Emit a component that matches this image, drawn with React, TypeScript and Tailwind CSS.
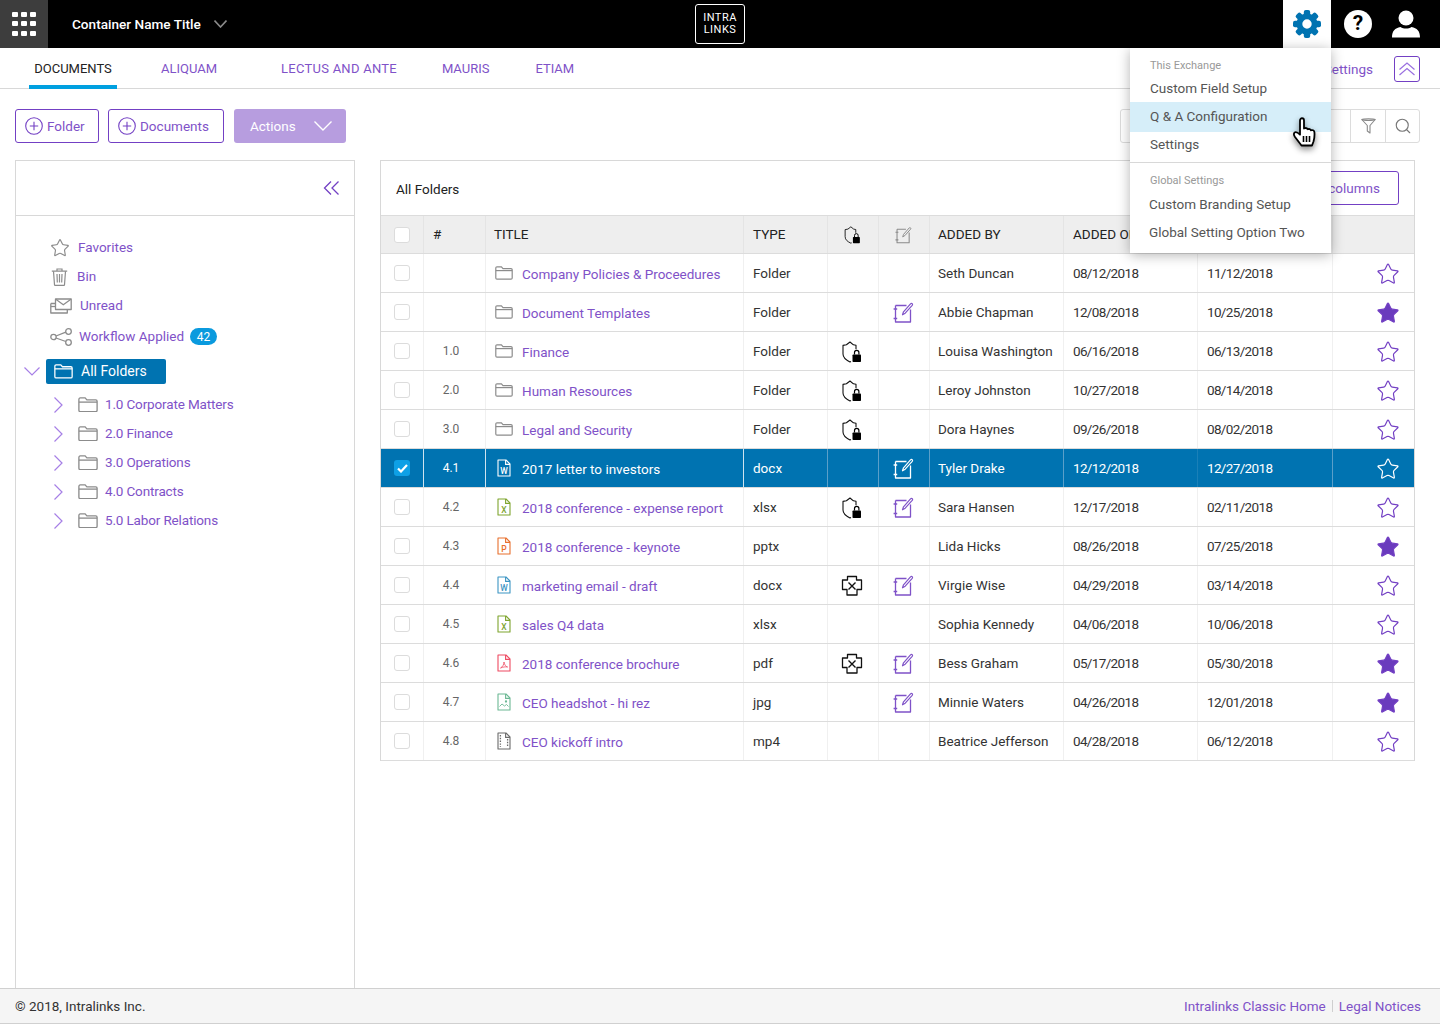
import { Search, Star } from "lucide-react"

const purple = "text-[#7f52c8]"

function Folder({ color = "#8c8c8c", w = 18 }: { color?: string; w?: number }) {
  return (
    <svg width={w} height={(w * 14) / 18} viewBox="0 0 18 14" fill="none" stroke={color} strokeWidth="1.2" className="shrink-0">
      <path d="M.8 2.2c0-.8.5-1.4 1.2-1.4h4.4l1.6 1.8h8c.7 0 1.2.5 1.2 1.2v8.2c0 .7-.5 1.2-1.2 1.2H2c-.7 0-1.2-.5-1.2-1.2z" />
      <path d="M.8 4.6h16.4" />
    </svg>
  )
}

function FileIcon({ kind, white }: { kind: string; white?: boolean }) {
  const colors: Record<string, string> = { docx: "#3d95c4", xlsx: "#7fa52f", pptx: "#e8702e", pdf: "#ee4b62", jpg: "#6cb894", mp4: "#6b6b6b" }
  const c = white ? "#ffffff" : colors[kind]
  const letters: Record<string, string> = { docx: "W", xlsx: "X", pptx: "P" }
  return (
    <svg width="14" height="18" viewBox="0 0 14 18" fill="none" stroke={c} strokeWidth="1.1" className="shrink-0">
      <path d="M1 1h8l4 4v12H1z" strokeLinejoin="round" />
      <path d="M8.6 1v4.4H13" />
      {letters[kind] && (
        <text x="7" y="14.5" textAnchor="middle" fontSize="8.5" fill={c} stroke="none" fontFamily="Roboto, sans-serif" fontWeight="500">
          {letters[kind]}
        </text>
      )}
      {kind === "pdf" && <path d="M3.5 14c2-1 3.5-3.5 3.5-6 .4 2.5 1.6 4.5 3.6 5-2.3-.4-4.7 0-7.100 1z" strokeWidth=".8" />}
      {kind === "jpg" && (
        <>
          <path d="M2.500 13.500l2.500-2.500 2.500 2 2-1.500 2 2" strokeWidth=".9" />
          <circle cx="9" cy="8.500" r=".6" />
        </>
      )}
      {kind === "mp4" && <path d="M3.400 3v12M10.600 7v8" strokeDasharray="1.4 1.4" strokeWidth="1.3" />}
    </svg>
  )
}

function ShieldLock({ small }: { small?: boolean }) {
  return (
    <svg width={small ? 17 : 20} height={small ? 18 : 22} viewBox="0 0 20 22" fill="none" className="shrink-0">
      <path d="M9 20.600L8 21C4 19 1 17 1 13V4.400l3.400-.6L8 1l3.400 2.800 2.600.5v4" stroke="#111" strokeWidth="1.1" strokeLinejoin="round" />
      <rect x="10.500" y="13.500" width="8.500" height="7.500" rx=".8" fill="#000" />
      <path d="M12.500 13.500v-2a2.200 2.200 0 014.400 0v2" stroke="#000" strokeWidth="1.2" />
    </svg>
  )
}

function ShieldX() {
  return (
    <svg width="22" height="22" viewBox="0 0 22 22" fill="none" stroke="#111" strokeWidth="1.3" className="shrink-0">
      <path d="M6.500 1.500h9v3.500h5v9.500h-4.500v5.500h-10v-5.500H1.500V5h5z" strokeLinejoin="round" />
      <path d="M7.500 7.500l7 7M14.500 7.500l-7 7" strokeWidth="1.4" />
    </svg>
  )
}

function EditNote({ color = "#7f52c8", small }: { color?: string; small?: boolean }) {
  return (
    <svg width={small ? 17 : 21} height={small ? 18 : 21} viewBox="0 0 21 21" fill="none" stroke={color} strokeWidth="1.3" className="shrink-0">
      <path d="M2.500 3.500h11M2.500 3.500v16.500h15v-12.500" strokeLinejoin="round" />
      <path d="M.6 7h3.600M.6 16.500h3.600" />
      <path d="M9.500 12.800l1-3L17.500 1.800c.5-.6 1.200-.6 1.700-.1.5.5.500 1.100 0 1.700l-7 7.800z" strokeWidth="1.200" strokeLinejoin="round" />
    </svg>
  )
}

function PlusCircle() {
  return (
    <svg width="18" height="18" viewBox="0 0 18 18" fill="none" stroke="#7340c4" strokeWidth="1.100" className="shrink-0">
      <circle cx="9" cy="9" r="8.300" />
      <path d="M9 4.800v8.400M4.800 9h8.400" />
    </svg>
  )
}

function Bin() {
  return (
    <svg width="17" height="18" viewBox="0 0 17 18" fill="none" stroke="#8c8c8c" strokeWidth="1.200" className="shrink-0">
      <path d="M.8 3.200h15.400M6 3V1h5v2" />
      <path d="M2.500 3.200l1 13.500c0 .4.300.6.600.6h8.800c.3 0 .6-.2.6-.6l1-13.500" />
      <path d="M6 6l.3 8.500M8.500 6v8.500M11 6l-.3 8.500" />
    </svg>
  )
}

function Envelope() {
  return (
    <svg width="22" height="16" viewBox="0 0 22 16" fill="none" stroke="#8c8c8c" strokeWidth="1.300" className="shrink-0">
      <path d="M.8 5.500h5M.8 5.500V15h16.500v-3" strokeLinejoin="round" />
      <path d="M.8 8.500H5" />
      <path d="M5.500 1h15.700v10.500H5.500z" strokeLinejoin="round" fill="#fff" />
      <path d="M5.800 1.300l7.500 5.500 7.600-5.500" />
    </svg>
  )
}

function Workflow() {
  return (
    <svg width="22" height="18" viewBox="0 0 22 18" fill="none" stroke="#8c8c8c" strokeWidth="1.300" className="shrink-0">
      <circle cx="3.500" cy="9" r="2.700" />
      <circle cx="18.500" cy="3.500" r="2.800" />
      <circle cx="18.500" cy="14.500" r="2.800" />
      <path d="M6 8l9.800-3.800M6 10l9.800 3.500" />
    </svg>
  )
}

function Funnel() {
  return (
    <svg width="15" height="16" viewBox="0 0 15 16" fill="none" stroke="#8a8a8a" strokeWidth="1.100">
      <path d="M.8 1.500C2.500.6 12.500.6 14.200 1.500L9 7.500v7.500L6.300 13V7.500z" strokeLinejoin="round" />
      <path d="M.8 1.500c2 1.300 11.400 1.300 13.400 0" />
    </svg>
  )
}

function Hand() {
  return (
    <svg width="28" height="34" viewBox="0 0 28 34" className="drop-shadow-[0_3px_3px_rgba(0,0,0,0.45)]">
      <path
        d="M8 3.500c0-3 4-3 4 0v8l1.500-.5c1.500 0 2 .8 2.300 1.300 1.200-.6 2.700-.2 3.200 1 1.300-.6 3.200 0 3.400 1.700.3 3 .1 6-.9 9.500L20 28.500H9.500L3 20c-1.200-1.800-1.500-3.300-.5-4.300 1-.9 2.800-.6 5.500 2z"
        fill="#fff"
        stroke="#000"
        strokeWidth="1.800"
        strokeLinejoin="round"
      />
      <path d="M11.500 19v6M14.500 19v6M17.500 19v6" stroke="#000" strokeWidth="1.600" />
    </svg>
  )
}

function Gear() {
  const teeth = [0, 45, 90, 135, 180, 225, 270, 315]
  return (
    <svg width="28" height="28" viewBox="0 0 28 28" fill="#0073b1">
      {teeth.map((a) => (
        <rect key={a} x="10.800" y="0" width="6.400" height="8" rx="2" transform={`rotate(${a} 14 14)`} />
      ))}
      <path fillRule="evenodd" d="M14 3.500a10.500 10.500 0 100 21 10.500 10.500 0 000-21zm0 5.800a4.700 4.700 0 110 9.400 4.700 4.700 0 010-9.400z" />
    </svg>
  )
}

function Caret({ w, h, color, down, sw = 1.2 }: { w: number; h: number; color: string; down?: boolean; sw?: number }) {
  return (
    <svg width={w} height={h} viewBox={`0 0 ${w} ${h}`} fill="none" stroke={color} strokeWidth={sw} className="shrink-0">
      {down ? <path d={`M.5 .5L${w / 2} ${h - 1}L${w - 0.5} .5`} /> : <path d={`M.5 .5L${w - 1} ${h / 2}L.5 ${h - 0.5}`} />}
    </svg>
  )
}

const rows = [
  { n: "", title: "Company Policies & Proceedures", kind: "folder", type: "Folder", by: "Seth Duncan", on: "08/12/2018", mod: "11/12/2018" },
  { n: "", title: "Document Templates", kind: "folder", type: "Folder", edit: true, by: "Abbie Chapman", on: "12/08/2018", mod: "10/25/2018", fav: true },
  { n: "1.0", title: "Finance", kind: "folder", type: "Folder", lock: true, by: "Louisa Washington", on: "06/16/2018", mod: "06/13/2018" },
  { n: "2.0", title: "Human Resources", kind: "folder", type: "Folder", lock: true, by: "Leroy Johnston", on: "10/27/2018", mod: "08/14/2018" },
  { n: "3.0", title: "Legal and Security", kind: "folder", type: "Folder", lock: true, by: "Dora Haynes", on: "09/26/2018", mod: "08/02/2018" },
  { n: "4.1", title: "2017 letter to investors", kind: "docx", type: "docx", edit: true, by: "Tyler Drake", on: "12/12/2018", mod: "12/27/2018", sel: true },
  { n: "4.2", title: "2018 conference - expense report", kind: "xlsx", type: "xlsx", lock: true, edit: true, by: "Sara Hansen", on: "12/17/2018", mod: "02/11/2018" },
  { n: "4.3", title: "2018 conference - keynote", kind: "pptx", type: "pptx", by: "Lida Hicks", on: "08/26/2018", mod: "07/25/2018", fav: true },
  { n: "4.4", title: "marketing email - draft", kind: "docx", type: "docx", x: true, edit: true, by: "Virgie Wise", on: "04/29/2018", mod: "03/14/2018" },
  { n: "4.5", title: "sales Q4 data", kind: "xlsx", type: "xlsx", by: "Sophia Kennedy", on: "04/06/2018", mod: "10/06/2018" },
  { n: "4.6", title: "2018 conference brochure", kind: "pdf", type: "pdf", x: true, edit: true, by: "Bess Graham", on: "05/17/2018", mod: "05/30/2018", fav: true },
  { n: "4.7", title: "CEO headshot - hi rez", kind: "jpg", type: "jpg", edit: true, by: "Minnie Waters", on: "04/26/2018", mod: "12/01/2018", fav: true },
  { n: "4.8", title: "CEO kickoff intro", kind: "mp4", type: "mp4", by: "Beatrice Jefferson", on: "04/28/2018", mod: "06/12/2018" },
]

const grid = "grid grid-cols-[43px_62px_258px_84px_51px_51px_134px_134px_135px_81px]"

function Check({ on }: { on?: boolean }) {
  if (on) {
    return (
      <div className="flex h-4 w-4 items-center justify-center rounded-[3px] bg-[#0ea0e6]">
        <svg width="11" height="9" viewBox="0 0 11 9" fill="none" stroke="#fff" strokeWidth="2.200">
          <path d="M1 4.500l3 3 6-6.500" />
        </svg>
      </div>
    )
  }
  return <div className="h-4 w-4 rounded-[3px] border border-[#dcdcdc] bg-white" />
}

function Cell({ className = "", line = "border-[#f0f0f0]", children }: { className?: string; line?: string; children?: React.ReactNode }) {
  return <div className={`flex items-center border-r ${line} ${className}`}>{children}</div>
}

function TreeItem({ label }: { label: string }) {
  return (
    <div className="flex h-[29px] items-center pl-[38px]">
      <Caret w={9} h={16} color="#a67fe6" />
      <div className="ml-[15px]">
        <Folder w={20} />
      </div>
      <span className={`ml-[7px] tracking-[-0.15px] ${purple}`}>{label}</span>
    </div>
  )
}

export default function App() {
  return (
    <div className="relative flex h-[1024px] w-[1440px] flex-col overflow-hidden bg-white font-['Roboto',sans-serif] text-[13.5px] text-[#333]">
      {/* top bar */}
      <header className="flex h-12 shrink-0 items-center bg-black text-white">
        <div className="grid h-12 w-12 grid-cols-3 place-items-center bg-[#3d3d3d] px-[10px] py-[10px]">
          {Array.from({ length: 9 }).map((_, i) => (
            <span key={i} className="h-[5px] w-[6px] rounded-[1px] bg-white" />
          ))}
        </div>
        <span className="ml-6 w-[130px] whitespace-nowrap text-[13.6px] font-medium">Container Name Title</span>
        <div className="ml-3">
          <Caret w={13} h={8} color="#8a8a8a" down sw={1.6} />
        </div>
        <div className="ml-[468px] flex h-10 w-[50px] flex-col items-center justify-center rounded-[3px] border border-white text-[11px] leading-[12px] tracking-[0.5px]">
          <span>INTRA</span>
          <span>LINKS</span>
        </div>
        <div className="ml-auto flex h-12 w-[48px] items-center justify-center bg-white">
          <Gear />
        </div>
        <div className="ml-[13px] flex h-7 w-7 items-center justify-center rounded-full bg-white text-[21px] font-bold text-black">?</div>
        <svg width="30" height="28" viewBox="0 0 30 28" fill="#fff" className="ml-[19px] mr-[19px]">
          <circle cx="15" cy="8" r="7.500" />
          <path d="M1 27.500c0-6.500 3-9.500 8.500-10.500 3 2 8 2 11 0 5.500 1 8.500 4 8.500 10.500z" />
        </svg>
      </header>

      {/* tabs */}
      <nav className="flex h-[41px] shrink-0 items-stretch border-b border-[#d8d8d8] pl-[29px] pr-5 pt-[2px] text-[13px]">
        <div className="mb-[-1px] flex w-[88px] items-center justify-center border-b-4 border-[#00a0e0] pt-[3px] text-[#222]">DOCUMENTS</div>
        <span className={`ml-11 flex items-center ${purple}`}>ALIQUAM</span>
        <span className={`ml-[64px] flex items-center tracking-[0.25px] ${purple}`}>LECTUS AND ANTE</span>
        <span className={`ml-[45px] flex items-center ${purple}`}>MAURIS</span>
        <span className={`ml-[46px] flex items-center ${purple}`}>ETIAM</span>
        <span className={`ml-auto flex items-center text-[13.5px] ${purple}`}>Settings</span>
        <div className="my-auto ml-[21px] flex h-[26px] w-[26px] items-center justify-center rounded-[3px] border border-[#7340c4]">
          <svg width="16" height="14" viewBox="0 0 16 14" fill="none" stroke="#9a70e0" strokeWidth="1.200">
            <path d="M.5 7.500L8 1l7.500 6.500M.5 13L8 6.500 15.500 13" />
          </svg>
        </div>
      </nav>

      {/* toolbar */}
      <div className="flex h-[71px] shrink-0 items-center px-5 pl-[15px] pt-[3px]">
        <button className={`flex h-[34px] w-[84px] items-center gap-[4px] rounded-[3px] border border-[#7340c4] pl-[9px] ${purple}`}>
          <PlusCircle />
          Folder
        </button>
        <button className={`ml-[9px] flex h-[34px] w-[116px] items-center gap-[4px] rounded-[3px] border border-[#7340c4] pl-[9px] ${purple}`}>
          <PlusCircle />
          Documents
        </button>
        <button className="ml-[10px] flex h-[34px] w-[112px] items-center justify-between rounded-[3px] bg-[#b79ddf] pl-4 pr-[14px] text-white">
          Actions
          <Caret w={18} h={10} color="#fff" down sw={1.4} />
        </button>
        <div className="ml-auto flex h-[34px] w-[300px] rounded-[3px] border border-[#dcdcdc]">
          <div className="flex-1" />
          <div className="flex w-[35px] items-center justify-center border-l border-[#dcdcdc]">
            <Funnel />
          </div>
          <div className="flex w-[34px] items-center justify-center border-l border-[#dcdcdc]">
            <Search className="h-[18px] w-[18px] text-[#777]" strokeWidth={1.5} />
          </div>
        </div>
      </div>

      {/* body */}
      <main className="flex min-h-0 flex-1 items-start px-[15px]">
        <aside className="flex h-full w-[340px] shrink-0 flex-col border-x border-t border-[#d8d8d8]">
          <div className="flex h-[55px] shrink-0 items-center justify-end border-b border-[#d8d8d8] pr-[15px]">
            <svg width="16" height="14" viewBox="0 0 16 14" fill="none" stroke="#7340c4" strokeWidth="1.300">
              <path d="M8 .5L1.500 7 8 13.500M15.500 .5L9 7l6.500 6.500" />
            </svg>
          </div>
          <div className="pt-[17px]">
            <div className="flex h-[29px] items-center pl-[34px]">
              <Star className="h-5 w-5 text-[#8c8c8c]" strokeWidth={1.4} />
              <span className={`ml-2 ${purple}`}>Favorites</span>
            </div>
            <div className="flex h-[29px] items-center pl-[35px]">
              <Bin />
              <span className={`ml-[9px] ${purple}`}>Bin</span>
            </div>
            <div className="flex h-[29px] items-center pl-[34px]">
              <Envelope />
              <span className={`ml-2 ${purple}`}>Unread</span>
            </div>
            <div className="flex h-[33px] items-center pl-[34px]">
              <Workflow />
              <span className={`ml-[7px] ${purple}`}>Workflow Applied</span>
              <span className="ml-[6px] flex h-[17px] w-[27px] items-center justify-center rounded-full bg-[#0a9ade] text-[12px] text-white">42</span>
            </div>
            <div className="flex h-[37px] items-center pl-[8px]">
              <Caret w={16} h={9} color="#a67fe6" down />
              <div className="ml-[6px] flex h-[25px] w-[120px] items-center rounded-[2px] bg-[#0073b1] pl-[8px] text-[14px] text-white">
                <Folder color="#fff" w={19} />
                <span className="ml-2">All Folders</span>
              </div>
            </div>
            <div>
              {["1.0 Corporate Matters", "2.0 Finance", "3.0 Operations", "4.0 Contracts", "5.0 Labor Relations"].map((t) => (
                <TreeItem key={t} label={t} />
              ))}
            </div>
          </div>
        </aside>

        <section className="ml-[25px] w-[1035px] shrink-0 border-x border-t border-[#d8d8d8]">
          <div className="flex h-[54px] items-center justify-between px-[15px] text-[#222]">
            <span className="pt-[2px]">All Folders</span>
            <button className={`flex h-[34px] w-[150px] items-center justify-end rounded-[3px] border border-[#7340c4] pr-[18px] ${purple}`}>Edit columns</button>
          </div>
          <div className={`${grid} h-[39px] border-y border-[#dcdcdc] bg-[#eeeeee] text-[#222]`}>
            <div className="flex items-center justify-center border-r border-[#e4e4e4]">
              <Check />
            </div>
            <div className="flex items-center border-r border-[#e4e4e4] pl-[9px]">#</div>
            <div className="flex items-center border-r border-[#e4e4e4] pl-[8px]">TITLE</div>
            <div className="flex items-center border-r border-[#e4e4e4] pl-[9px]">TYPE</div>
            <div className="flex items-center justify-center border-r border-[#e4e4e4] pr-[2px]">
              <ShieldLock small />
            </div>
            <div className="flex items-center justify-center border-r border-[#e4e4e4] pr-[2px]">
              <EditNote color="#8a8a8a" small />
            </div>
            <div className="flex items-center border-r border-[#e4e4e4] pl-[8px]">ADDED BY</div>
            <div className="flex items-center border-r border-[#e4e4e4] pl-[9px]">ADDED ON</div>
            <div className="border-r border-[#e4e4e4]" />
            <div />
          </div>
          {rows.map((r) => {
            const strong = r.sel ? "border-[#cfe3ef]" : "border-[#f0f0f0]"
            const thin = r.sel ? "border-[#5a9fc9]" : "border-[#f0f0f0]"
            return (
              <div key={r.title} className={`${grid} h-[39px] border-b border-[#dcdcdc] ${r.sel ? "bg-[#0073b1] text-white" : ""}`}>
                <Cell line={strong} className="justify-center">
                  <Check on={r.sel} />
                </Cell>
                <Cell line={strong} className={`justify-center pr-[7px] text-[12px] ${r.sel ? "text-white" : "text-[#666]"}`}>
                  {r.n}
                </Cell>
                <Cell line={strong} className="pl-[8px]">
                  <div className="flex w-[19px] justify-center">{r.kind === "folder" ? <Folder /> : <FileIcon kind={r.kind} white={r.sel} />}</div>
                  <span className={`ml-[9px] pt-[2px] ${r.sel ? "text-white" : purple}`}>{r.title}</span>
                </Cell>
                <Cell line={thin} className="pl-[9px]">
                  {r.type}
                </Cell>
                <Cell line={thin} className="justify-center pr-[3px] pt-[1px]">
                  {r.lock && <ShieldLock />}
                  {r.x && <ShieldX />}
                </Cell>
                <Cell line={thin} className="justify-center pr-[2px]">
                  {r.edit && <EditNote color={r.sel ? "#fff" : "#7f52c8"} />}
                </Cell>
                <Cell line={thin} className="pl-[8px]">
                  {r.by}
                </Cell>
                <Cell line={r.sel ? "border-[#1a80b8]" : "border-[#f0f0f0]"} className="pl-[9px] tracking-[-0.65px]">
                  {r.on}
                </Cell>
                <Cell line={thin} className="pl-[9px] tracking-[-0.65px]">
                  {r.mod}
                </Cell>
                <div className="flex items-center justify-end pr-[14px] pt-[2px]">
                  <Star className={`h-6 w-6 ${r.sel ? "text-white" : "text-[#7340c4]"}`} fill={r.fav ? "#6a3bbd" : "none"} strokeWidth={1.2} />
                </div>
              </div>
            )
          })}
        </section>
      </main>

      {/* footer */}
      <footer className="flex h-[36px] shrink-0 items-center justify-between border-y border-[#d0d0d0] bg-[#f5f5f5] pl-[15px] pr-[19px] text-[#333]">
        <span>© 2018, Intralinks Inc.</span>
        <span className={`flex items-center ${purple}`}>
          Intralinks Classic Home
          <span className="mx-[6px] h-3 w-px bg-[#cfcfcf]" />
          Legal Notices
        </span>
      </footer>

      {/* settings menu */}
      <div className="absolute left-[1130px] top-12 w-[201px] bg-white text-[#555] shadow-[0_2px_12px_rgba(0,0,0,0.3)]">
        <div className="px-5 pb-[1px] pt-[11px] text-[11px] leading-[14px] text-[#999]">This Exchange</div>
        <div className="flex h-7 items-center px-5">Custom Field Setup</div>
        <div className="flex h-[30px] items-center bg-[#d6eef9] px-5 pb-[2px]">Q &amp; A Configuration</div>
        <div className="flex h-6 items-center px-5">Settings</div>
        <div className="mt-[6px] border-t border-[#d8d8d8]" />
        <div className="px-5 pb-[2px] pt-[11px] text-[11px] leading-[14px] text-[#999]">Global Settings</div>
        <div className="flex h-7 items-center pl-[19px]">Custom Branding Setup</div>
        <div className="mb-[7px] flex h-7 items-center pl-[19px]">Global Setting Option Two</div>
      </div>
      <div className="absolute left-[1292px] top-[117px]">
        <Hand />
      </div>
    </div>
  )
}
